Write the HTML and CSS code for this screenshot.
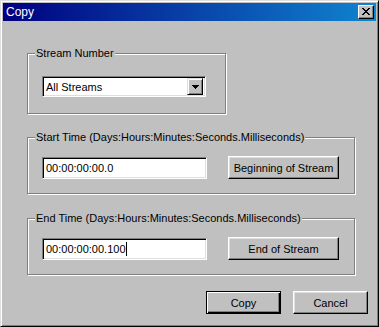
FILE: index.html
```html
<!DOCTYPE html>
<html lang="en">
<head>
  <meta charset="UTF-8" />
  <title>Copy</title>
  <link rel="stylesheet" href="styles.css">
</head>
<body>
  <div class="window">
    <div class="titlebar">
      <span class="title">Copy</span>
      <span class="close">
        <svg width="8" height="7" viewBox="0 0 8 7" shape-rendering="crispEdges">
          <path d="M0 0h2v1h-2z M6 0h2v1h-2z M1 1h2v1h-2z M5 1h2v1h-2z M2 2h4v1h-4z M3 3h2v1h-2z M2 4h4v1h-4z M1 5h2v1h-2z M5 5h2v1h-2z M0 6h2v1h-2z M6 6h2v1h-2z" fill="#000"/>
        </svg>
      </span>
    </div>

    <div class="content">
      <fieldset class="group group-small">
        <legend>Stream Number</legend>
        <div class="row">
          <div class="select">
            <span class="select-value">All Streams</span>
            <span class="select-arrow">
              <svg width="7" height="4" viewBox="0 0 7 4" shape-rendering="crispEdges">
                <path d="M0 0h7v1h-7z M1 1h5v1h-5z M2 2h3v1h-3z M3 3h1v1h-1z" fill="#000"/>
              </svg>
            </span>
          </div>
        </div>
      </fieldset>

      <fieldset class="group">
        <legend>Start Time (Days:Hours:Minutes:Seconds.Milliseconds)</legend>
        <div class="row">
          <div class="field">00:00:00:00.0</div>
          <span class="btn wide">Beginning of Stream</span>
        </div>
      </fieldset>

      <fieldset class="group group-last">
        <legend>End Time (Days:Hours:Minutes:Seconds.Milliseconds)</legend>
        <div class="row">
          <div class="field">00:00:00:00.100<span class="caret"></span></div>
          <span class="btn wide">End of Stream</span>
        </div>
      </fieldset>

      <div class="actions">
        <span class="btn default">Copy</span>
        <span class="btn">Cancel</span>
      </div>
    </div>
  </div>
</body>
</html>
```

FILE: styles.css
```css
html, body {
  margin: 0;
  padding: 0;
  background: #c0c0c0;
}
body {
  font-family: "Liberation Sans", Arial, sans-serif;
  font-size: 11px;
  color: #000;
}
.window {
  box-sizing: border-box;
  width: 379px;
  height: 327px;
  background: #c0c0c0;
  border: 1px solid;
  border-color: #dfdfdf #000 #000 #dfdfdf;
  box-shadow: inset 1px 1px #fff, inset -1px -1px #808080;
  padding: 2px;
}
.titlebar {
  height: 18px;
  display: flex;
  align-items: center;
  justify-content: space-between;
  padding: 0 2px 0 2px;
  background: linear-gradient(to right, #000080, #1084d0);
}
.title {
  color: #fff;
  font-size: 12px;
  padding-left: 1px;
}
.close {
  box-sizing: border-box;
  width: 16px;
  height: 14px;
  display: flex;
  align-items: center;
  justify-content: center;
  background: #c0c0c0;
  border: 1px solid;
  border-color: #fff #000 #000 #fff;
  box-shadow: inset -1px -1px #808080;
  padding: 0 1px 1px 0;
}
.content {
  padding: 26px 8px 0 24px;
}
.group {
  margin: 0 0 18px 0;
  padding: 0;
  width: 326px;
  border: 1px solid #808080;
  box-shadow: inset 1px 1px #fff, 1px 1px #fff;
}
.group-small {
  width: 197px;
  margin-bottom: 17px;
}
.group-last {
  margin-bottom: 16px;
}
.group legend {
  margin-left: 7px;
  padding: 0 1px;
  line-height: 13px;
  background: #c0c0c0;
}
.row {
  display: flex;
  align-items: center;
  gap: 21px;
  padding: 12px 0 14px 14px;
}
.group-small .row {
  padding: 16px 0 16px 14px;
}
.select {
  box-sizing: border-box;
  width: 164px;
  height: 21px;
  display: flex;
  align-items: center;
  justify-content: space-between;
  background: #fff;
  border: 1px solid;
  border-color: #808080 #fff #fff #808080;
  box-shadow: inset 1px 1px #000, inset -1px -1px #dfdfdf;
  padding: 2px 2px 2px 3px;
}
.select-arrow {
  box-sizing: border-box;
  width: 16px;
  height: 17px;
  display: flex;
  align-items: center;
  justify-content: center;
  background: #c0c0c0;
  border: 1px solid;
  border-color: #dfdfdf #000 #000 #dfdfdf;
  box-shadow: inset 1px 1px #fff, inset -1px -1px #808080;
}
.field {
  box-sizing: border-box;
  width: 165px;
  height: 22px;
  display: flex;
  align-items: center;
  background: #fff;
  border: 1px solid;
  border-color: #808080 #fff #fff #808080;
  box-shadow: inset 1px 1px #000, inset -1px -1px #dfdfdf;
  padding: 0 3px;
}
.caret {
  display: inline-block;
  width: 1px;
  height: 14px;
  background: #000;
}
.btn {
  box-sizing: border-box;
  width: 75px;
  height: 23px;
  display: flex;
  align-items: center;
  justify-content: center;
  background: #c0c0c0;
  border: 1px solid;
  border-color: #fff #000 #000 #fff;
  box-shadow: inset -1px -1px #808080, inset 1px 1px #dfdfdf;
}
.btn.wide {
  width: 111px;
}
.btn.default {
  border: 1px solid #000;
  box-shadow: inset 1px 1px #fff, inset -1px -1px #000, inset -2px -2px #808080;
}
.actions {
  display: flex;
  justify-content: flex-end;
  gap: 12px;
}
```
